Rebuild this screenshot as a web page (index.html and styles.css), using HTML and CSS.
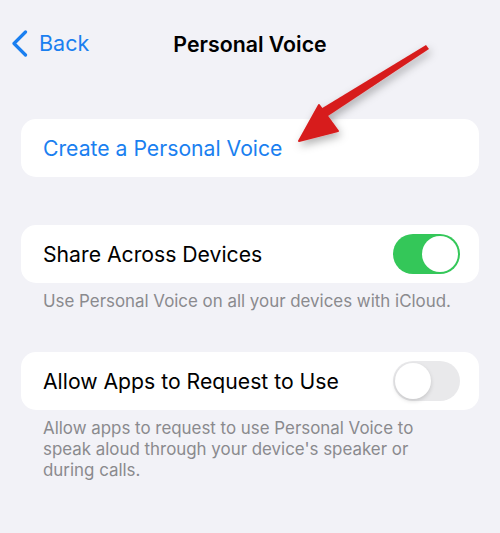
FILE: index.html
```html
<!DOCTYPE html>
<html>
<head>
<meta charset="utf-8">
<link rel="stylesheet" href="styles.css">
</head>
<body>
<div class="screen">
  <header class="nav">
    <div class="back">
      <svg class="chev" width="17" height="27" viewBox="0 0 17 27"><path d="M14.5 2 L3 13.5 L14.5 25" fill="none" stroke="#1a7ff0" stroke-width="3.2" stroke-linecap="round" stroke-linejoin="round"/></svg>
      <span>Back</span>
    </div>
    <div class="title">Personal Voice</div>
  </header>

  <section class="group first">
    <div class="card"><span class="link">Create a Personal Voice</span></div>
  </section>

  <section class="group">
    <div class="card">
      <span class="label">Share Across Devices</span>
      <div class="toggle on"><div class="knob"></div></div>
    </div>
    <p class="foot">Use Personal Voice on all your devices with iCloud.</p>
  </section>

  <section class="group">
    <div class="card">
      <span class="label">Allow Apps to Request to Use</span>
      <div class="toggle off"><div class="knob"></div></div>
    </div>
    <p class="foot">Allow apps to request to use Personal Voice to speak aloud through your device's speaker or during calls.</p>
  </section>

  <svg class="arrow" width="500" height="200" viewBox="0 0 500 200">
    <defs>
      <filter id="sh" x="-20%" y="-20%" width="140%" height="140%">
        <feDropShadow dx="2" dy="4" stdDeviation="4" flood-color="#000" flood-opacity="0.3"/>
      </filter>
    </defs>
    <g filter="url(#sh)">
      <path d="M426 45 L429 49 L325 118 L319 110 Z" fill="#d71d1d"/>
      <path d="M299 141 L319 105 L338 131 Z" fill="#d71d1d" stroke="#d71d1d" stroke-width="2" stroke-linejoin="round"/>
    </g>
  </svg>
</div>
</body>
</html>
```
FILE: styles.css
```css
html, body {
  margin: 0;
  padding: 0;
  background: #f2f2f7;
}
.screen {
  position: relative;
  width: 500px;
  height: 533px;
  overflow: hidden;
  font-family: Inter, "Liberation Sans", sans-serif;
  background: #f2f2f7;
}
.nav {
  position: relative;
  height: 88px;
  display: flex;
  align-items: flex-start;
}
.back {
  display: flex;
  align-items: center;
  gap: 11px;
  padding: 29px 0 0 11px;
  color: #1a7ff0;
  font-size: 21.5px;
}
.back span {
  line-height: 28px;
}
.title {
  position: absolute;
  left: 0;
  right: 0;
  top: 29px;
  text-align: center;
  font-size: 21.3px;
  font-weight: 600;
  line-height: 30px;
  color: #000;
}
.group {
  margin: 0 21px 0 21px;
}
.group.first {
  margin-top: 31px;
  margin-bottom: 48px;
}
.card {
  background: #fff;
  border-radius: 15px;
  height: 58px;
  display: flex;
  align-items: center;
  justify-content: space-between;
  padding: 0 19px 0 22px;
}
.link {
  color: #1a7ff0;
  font-size: 21.2px;
}
.label {
  color: #000;
  font-size: 21.2px;
}
.toggle {
  width: 67px;
  height: 40px;
  border-radius: 20px;
  position: relative;
  box-sizing: border-box;
}
.toggle.on {
  background: #34c759;
}
.toggle.off {
  background: #e9e9eb;
}
.knob {
  position: absolute;
  top: 2px;
  width: 36px;
  height: 36px;
  border-radius: 50%;
  background: #fff;
  box-shadow: 0 2px 4px rgba(0,0,0,0.15);
}
.toggle.on .knob { right: 2px; box-shadow: none; }
.toggle.off .knob { left: 2px; }
.foot {
  margin: 8px 0 40px 22px;
  padding-right: 21px;
  color: #8a8a8e;
  font-size: 16.9px;
  line-height: 21px;
}
.arrow {
  position: absolute;
  left: 0;
  top: 0;
  pointer-events: none;
}
```
